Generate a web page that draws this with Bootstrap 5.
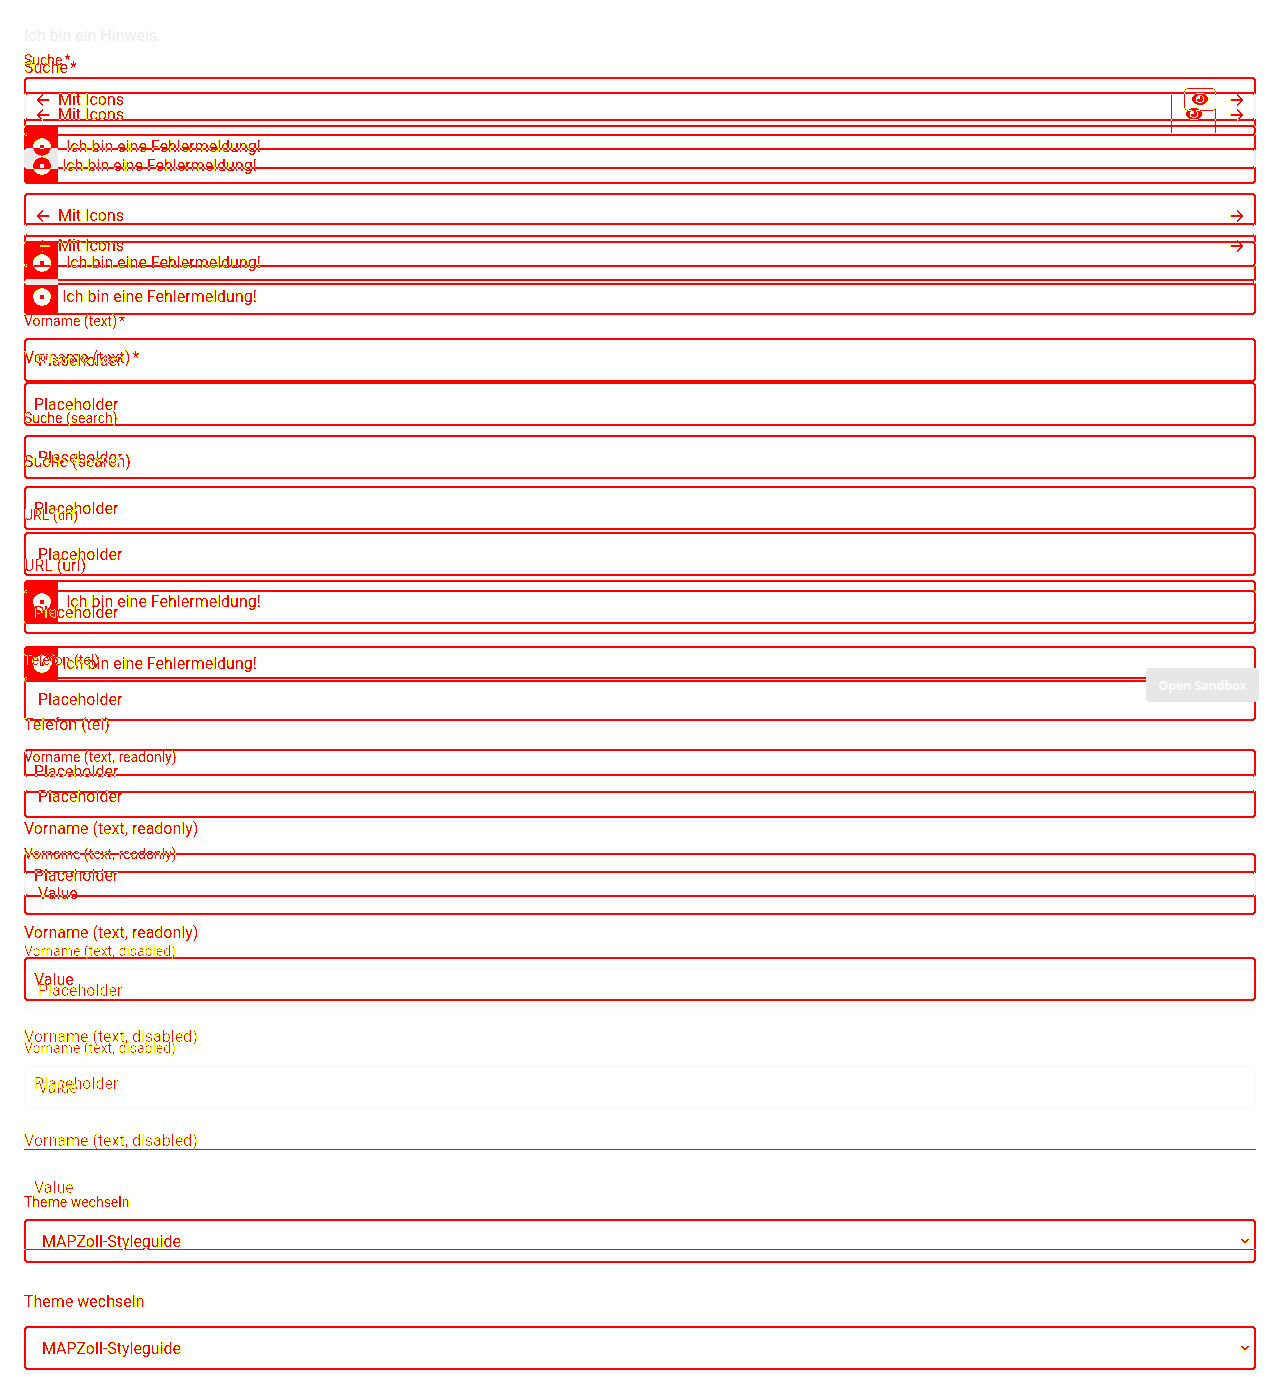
<!DOCTYPE html>
<html lang="de">
<head>
<meta charset="utf-8">
<meta name="viewport" content="width=device-width, initial-scale=1">
<title>Input – visueller Vergleich</title>
<link href="https://cdn.jsdelivr.net/npm/bootstrap@5.3.0/dist/css/bootstrap.min.css" rel="stylesheet">
<style>
  body { font-family: Roboto, sans-serif; font-size: 16px; line-height: 24px; background: #fff; min-height: 1394px; }
  .hint { height: 43px; padding: 24px 24px 0; color: #ebebeb; }
  /* Both versions are blended by difference, then mapped to red, yellow and grey */
  .compare { display: grid; height: 1351px; background: #000; filter: url(#diffmap); }
  .version { grid-area: 1 / 1; padding: 0 24px; }
  .v-old { color: #f0f; --err: #0ff; --label: 34px; --gap: 19px; --errgap: 4px; --errh: 44px; --errafter: 19px; --pad: 12px; --msg: 8px; }
  .v-new { color: #ff00c0; --err: #00ff80; mix-blend-mode: difference; --label: 49px; --gap: 11px; --errgap: 12px; --errh: 36px; --errafter: 18px; --pad: 8px; --msg: 4px; }
  .v-old .caption { font-size: 14px; }
  .caption { height: var(--label); display: flex; align-items: center; gap: 2px; }
  .control { height: 44px; border: 2px solid currentColor; border-radius: 4px; padding: 2px var(--pad) 0; display: flex; align-items: center; margin-bottom: var(--gap); }
  .control.iconed { padding: 2px 10px 0 9.5px; margin-bottom: var(--errgap); }
  .control.iconed > span { margin-left: 8.5px; }
  .control.invalid { margin-bottom: var(--errgap); }
  .control.pick { padding: 2px 4px 0 16px; }
  .control.pick svg { margin-top: -2px; }
  .v-old .control.off { border-color: #000018; }
  .v-new .control.off { border-color: transparent; }
  .control.off span, .caption.off { opacity: .68; }
  .error { color: var(--err); height: var(--errh); border: 2px solid currentColor; border-radius: 4px; margin-bottom: var(--errafter); display: flex; align-items: center; overflow: hidden; }
  .error svg { margin-left: -2px; flex: none; }
  .error span { margin-left: var(--msg); }
  .v-old .first-err { margin-bottom: 24px; }
  .v-new .first-err { margin-bottom: 39px; }
  .rule { height: 1px; background: currentColor; }
  .v-old .rule { margin: 40px 0 35px; }
  .v-new .rule { margin: 40px 0 27px; }
  .peek { display: flex; justify-content: center; border: 1px solid currentColor; margin-right: 14px; }
  .v-old .peek { width: 32px; height: 23px; border-radius: 4px; margin-top: -2px; }
  .v-new .peek { width: 45px; height: 38px; border-width: 0 1px; margin-top: -2px; }
  .peek svg { margin: auto; }
  .sandbox { position: absolute; left: 1146px; top: 668px; width: 113px; height: 34px; padding: 0; border: 0; border-radius: 4px; background: #e7e7e7; color: #fbfbfb; font: 700 12.5px/36px "Open Sans", sans-serif; letter-spacing: -.15px; text-align: center; }
</style>
<script src="https://cdn.jsdelivr.net/npm/bootstrap@5.3.0/dist/js/bootstrap.bundle.min.js"></script>
</head>
<body class="position-relative">
<svg width="0" height="0" class="position-absolute" aria-hidden="true">
  <defs>
    <filter id="diffmap" x="0" y="0" width="100%" height="100%" color-interpolation-filters="sRGB">
      <feColorMatrix values="-1 -1 1 0 0  .5 .5 0 0 0  .5 .5 0 0 0  0 0 0 0 1"/>
      <feComponentTransfer>
        <feFuncR type="linear" slope="-.16" intercept="1"/>
        <feFuncG type="discrete" tableValues="1 1 1 1 1 1 0 0 0 0 0 0 1 1 1 1 1 1 0 0"/>
        <feFuncB type="discrete" tableValues="1 1 1 0 0 0 0 0 0 0 0 0 0 0 0 0 0 0 0 0"/>
      </feComponentTransfer>
      <feColorMatrix values="1 0 0 0 0  1 1 0 0 -1  1 0 1 0 -1  0 0 0 0 1"/>
    </filter>
    <symbol id="back" viewBox="0 0 14 14"><path d="M13.5 7H1.5M7 1.5 1.5 7 7 12.5" fill="none" stroke="currentColor" stroke-width="1.6"/></symbol>
    <symbol id="next" viewBox="0 0 14 14"><path d="M.5 7h12M7 1.5 12.500 7 7 12.500" fill="none" stroke="currentColor" stroke-width="1.6"/></symbol>
    <symbol id="eye" viewBox="0 0 18 14"><path d="M1 7C4-.3 14-.3 17 7 14 14.300 4 14.300 1 7Z" fill="currentColor" stroke="currentColor" stroke-width="1.200"/><circle cx="9" cy="7" r="4.300" fill="#000"/><path d="M9 3.800V7H5.800A3.200 3.200 0 1 0 9 3.800Z" fill="currentColor"/></symbol>
    <symbol id="down" viewBox="0 0 10 6"><path d="M1 1l4 3.600L9 1" fill="none" stroke="currentColor" stroke-width="1.600"/></symbol>
    <symbol id="tab" viewBox="0 0 34 44"><path fill="currentColor" fill-rule="evenodd" d="M0 0H34V44H0ZM18 13.200a8.800 8.800 0 1 0 .01 0ZM16 20h4v4h-4Z"/></symbol>
  </defs>
</svg>

<div class="hint">Ich bin ein Hinweis.</div>

<main class="compare">
  <section class="version v-old">
    <div class="caption"><span>Suche</span><span>*</span></div>
    <div class="control iconed"><svg width="14" height="14"><use href="#back"/></svg><span class="me-auto">Mit Icons</span><div class="peek"><svg width="18" height="14"><use href="#eye"/></svg></div><svg width="14" height="14"><use href="#next"/></svg></div>
    <div class="error first-err"><svg width="34" height="44"><use href="#tab"/></svg><span>Ich bin eine Fehlermeldung!</span></div>
    <div class="control iconed"><svg width="14" height="14"><use href="#back"/></svg><span class="me-auto">Mit Icons</span><svg width="14" height="14"><use href="#next"/></svg></div>
    <div class="error"><svg width="34" height="44"><use href="#tab"/></svg><span>Ich bin eine Fehlermeldung!</span></div>
    <div class="caption"><span>Vorname (text)</span><span>*</span></div>
    <div class="control"><span>Placeholder</span></div>
    <div class="caption">Suche (search)</div>
    <div class="control"><span>Placeholder</span></div>
    <div class="caption">URL (url)</div>
    <div class="control invalid"><span>Placeholder</span></div>
    <div class="error"><svg width="34" height="44"><use href="#tab"/></svg><span>Ich bin eine Fehlermeldung!</span></div>
    <div class="caption">Telefon (tel)</div>
    <div class="control"><span>Placeholder</span></div>
    <div class="caption">Vorname (text, readonly)</div>
    <div class="control"><span>Placeholder</span></div>
    <div class="caption">Vorname (text, readonly)</div>
    <div class="control"><span>Value</span></div>
    <div class="caption off">Vorname (text, disabled)</div>
    <div class="control off"><span>Placeholder</span></div>
    <div class="caption off">Vorname (text, disabled)</div>
    <div class="control off mb-0"><span>Value</span></div>
    <div class="rule"></div>
    <div class="caption">Theme wechseln</div>
    <div class="control pick"><span class="me-auto">MAPZoll-Styleguide</span><svg width="10" height="6"><use href="#down"/></svg></div>
  </section>

  <section class="version v-new">
    <div class="caption"><span>Suche</span><span>*</span></div>
    <div class="control iconed"><svg width="14" height="14"><use href="#back"/></svg><span class="me-auto">Mit Icons</span><div class="peek"><svg width="18" height="14"><use href="#eye"/></svg></div><svg width="14" height="14"><use href="#next"/></svg></div>
    <div class="error first-err"><svg width="34" height="44"><use href="#tab"/></svg><span>Ich bin eine Fehlermeldung!</span></div>
    <div class="control iconed"><svg width="14" height="14"><use href="#back"/></svg><span class="me-auto">Mit Icons</span><svg width="14" height="14"><use href="#next"/></svg></div>
    <div class="error"><svg width="34" height="44"><use href="#tab"/></svg><span>Ich bin eine Fehlermeldung!</span></div>
    <div class="caption"><span>Vorname (text)</span><span>*</span></div>
    <div class="control"><span>Placeholder</span></div>
    <div class="caption">Suche (search)</div>
    <div class="control"><span>Placeholder</span></div>
    <div class="caption">URL (url)</div>
    <div class="control invalid"><span>Placeholder</span></div>
    <div class="error"><svg width="34" height="44"><use href="#tab"/></svg><span>Ich bin eine Fehlermeldung!</span></div>
    <div class="caption">Telefon (tel)</div>
    <div class="control"><span>Placeholder</span></div>
    <div class="caption">Vorname (text, readonly)</div>
    <div class="control"><span>Placeholder</span></div>
    <div class="caption">Vorname (text, readonly)</div>
    <div class="control"><span>Value</span></div>
    <div class="caption off">Vorname (text, disabled)</div>
    <div class="control off"><span>Placeholder</span></div>
    <div class="caption off">Vorname (text, disabled)</div>
    <div class="control off mb-0"><span>Value</span></div>
    <div class="rule"></div>
    <div class="caption">Theme wechseln</div>
    <div class="control pick"><span class="me-auto">MAPZoll-Styleguide</span><svg width="10" height="6"><use href="#down"/></svg></div>
  </section>
</main>

<button type="button" class="sandbox">Open Sandbox</button>
</body>
</html>
